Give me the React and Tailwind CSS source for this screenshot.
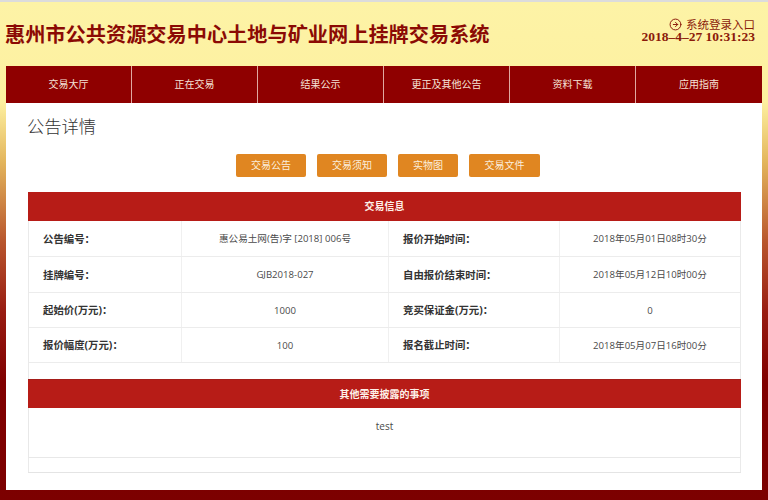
import { CircleArrowRight } from 'lucide-react';

const navItems = ['交易大厅', '正在交易', '结果公示', '更正及其他公告', '资料下载', '应用指南'];

const tabs = [
  { title: '交易公告', width: 'w-[70px]' },
  { title: '交易须知', width: 'w-[70px]' },
  { title: '实物图', width: 'w-[60px]' },
  { title: '交易文件', width: 'w-[71px]' },
];

const rows = [
  { height: 'h-[36px]', a: '公告编号：', b: '惠公易土网(告)字 [2018] 006号', c: '报价开始时间：', d: '2018年05月01日08时30分' },
  { height: 'h-[36px]', a: '挂牌编号：', b: 'GJB2018-027', c: '自由报价结束时间：', d: '2018年05月12日10时00分' },
  { height: 'h-[35px]', a: '起始价(万元)：', b: '1000', c: '竞买保证金(万元)：', d: '0' },
  { height: 'h-[35px]', a: '报价幅度(万元)：', b: '100', c: '报名截止时间：', d: '2018年05月07日16时00分' },
];

const App = () => {
  return (
    <div className="flex h-[500px] w-[768px] flex-col overflow-hidden border-t-2 border-[#dcdcdc] bg-[linear-gradient(to_bottom,#fdf3a6_0px,#fdf0a0_100px,#e3b55c_160px,#b8552d_240px,#981c12_310px,#800000_380px,#7c0000_500px)] [font-family:'Open_Sans','Noto_Sans_CJK_SC',sans-serif]">
      {/* Header */}
      <header className="flex h-[64px] shrink-0 items-center justify-between pl-[5px] pr-[13px]">
        <h1 className="text-[20.2px] font-bold leading-none text-[#8b0a04]">
          惠州市公共资源交易中心土地与矿业网上挂牌交易系统
        </h1>
        <div className="mb-[7px] flex flex-col items-end text-[#8b1a0a]">
          <div className="flex h-[12px] items-center gap-[4px] text-[11.5px] leading-none">
            <CircleArrowRight size={13} strokeWidth={1.8} />
            <span>系统登录入口</span>
          </div>
          <div className="h-[12px] text-[13.5px] font-bold leading-[12px] [font-family:'Liberation_Serif',serif]">
            2018–4–27 10:31:23
          </div>
        </div>
      </header>

      <main className="mx-[6px] flex h-[424px] w-[756px] shrink-0 flex-col bg-white">
        {/* Nav */}
        <nav className="grid h-[37px] shrink-0 grid-cols-6 bg-[#8f0000]">
          {navItems.map((item, i) => (
            <a
              key={item}
              className={`flex items-center justify-center text-[10px] text-[#f6e4d8] ${i < navItems.length - 1 ? 'border-r border-[#e0a8a0]' : ''}`}
            >
              {item}
            </a>
          ))}
        </nav>

        <div className="flex min-h-0 flex-1 flex-col px-[22px]">
          <h2 className="-ml-[1px] mt-[11px] h-[26px] text-[17.3px] font-light leading-[26px] text-[#333]">公告详情</h2>

          <div className="mt-[14px] flex h-[23px] gap-[11px] pl-[208px]">
            {tabs.map((tab) => (
              <button
                key={tab.title}
                className={`${tab.width} rounded-[2px] bg-[#e08621] text-[10px] text-[#fbeedd]`}
              >
                {tab.title}
              </button>
            ))}
          </div>

          <div className="mt-[15px] flex h-[281px] w-[713px] flex-col border-b border-[#e4e4e4]">
            <div className="flex h-[29px] shrink-0 items-center justify-center bg-[#b71c17] text-[10px] font-bold text-[#fdf0e8]">
              交易信息
            </div>

            <div className="border-x border-[#eaeaea]">
              {rows.map((row) => (
                <div
                  key={row.a}
                  className={`grid ${row.height} grid-cols-[153px_207px_171px_1fr] items-stretch border-b border-[#ececec] text-[9.6px] text-[#4a4a4a]`}
                >
                  <div className="flex items-center border-r border-[#f0f0f0] pl-[14px] pt-[2px] text-[10.4px] font-bold text-[#333]">{row.a}</div>
                  <div className="flex items-center justify-center border-r border-[#f0f0f0] pt-[2px]">{row.b}</div>
                  <div className="flex items-center border-r border-[#f0f0f0] pl-[14px] pt-[2px] text-[10.4px] font-bold text-[#333]">{row.c}</div>
                  <div className="flex items-center justify-center pt-[2px]">{row.d}</div>
                </div>
              ))}
            </div>

            <div className="h-[16px] shrink-0 border-x border-[#eaeaea]" />

            <div className="flex h-[29px] shrink-0 items-center justify-center border-t border-[#a51d19] bg-[#b71c17] pt-[1px] text-[10px] font-bold text-[#fdf0e8]">
              其他需要披露的事项
            </div>

            <div className="h-[50px] shrink-0 border-x border-b border-[#e8e8e8] pt-[11px] text-center text-[10px] leading-[14px] text-[#4a4a4a]">
              test
            </div>
            <div className="flex-1 border-x border-[#eaeaea]" />
          </div>
        </div>
      </main>
    </div>
  );
};

export default App;
